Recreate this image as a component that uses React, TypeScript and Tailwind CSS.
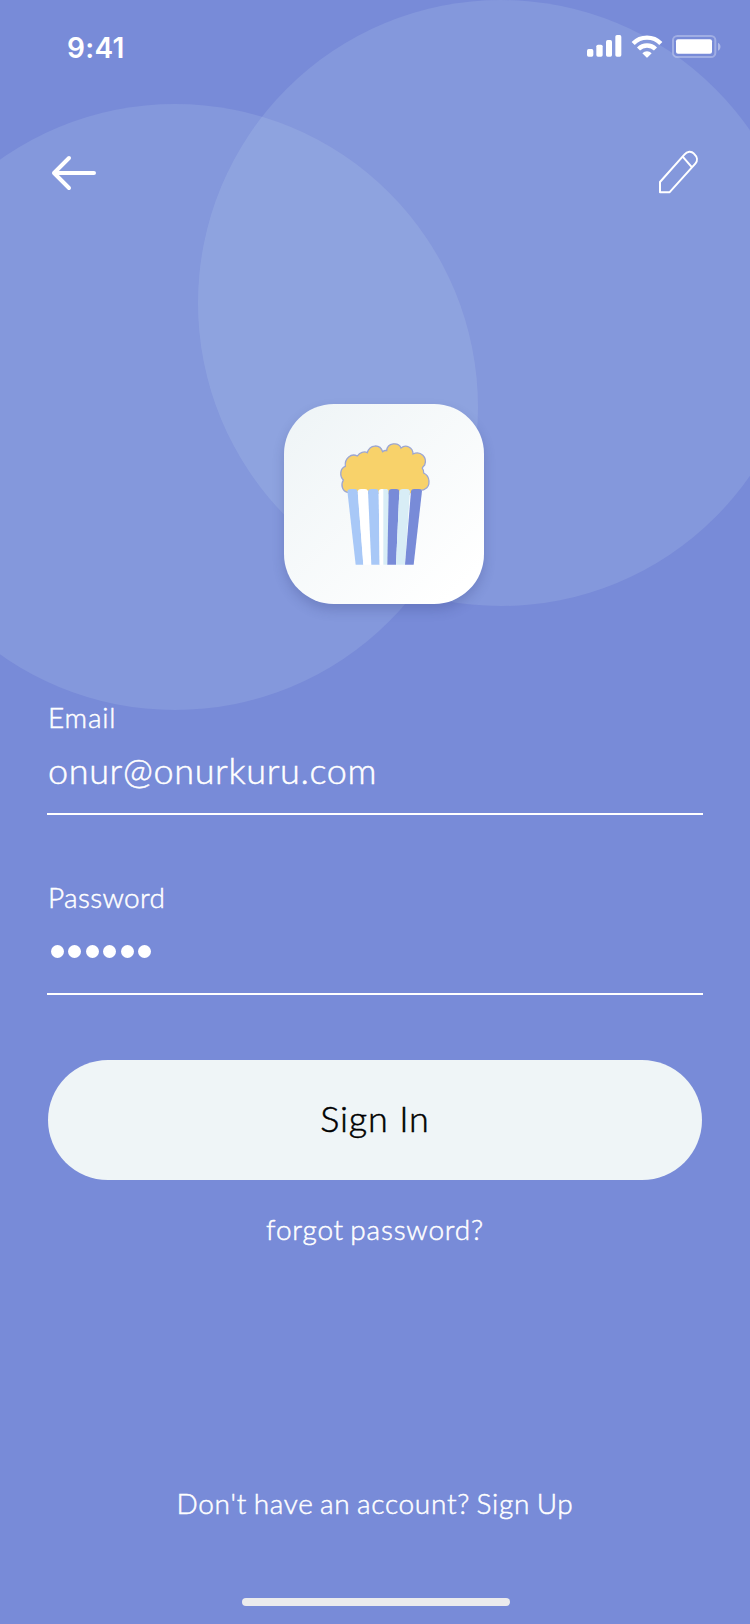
function SignalIcon() {
  return (
    <svg className="h-[22px] w-[35px]" viewBox="81 45 105 66" fill="white">
      <rect x="81" y="87" width="19" height="23" rx="5" />
      <rect x="109" y="74" width="19" height="36" rx="5" />
      <rect x="138" y="60" width="18" height="50" rx="5" />
      <rect x="166" y="45" width="18" height="65" rx="5" />
    </svg>
  );
}

function WifiIcon() {
  return (
    <svg className="h-[23px] w-[32px]" viewBox="212 42 96 69" fill="none" stroke="white" strokeWidth="13">
      <path d="M218.500 67.500A58 58 0 0 1 301.500 67.500" />
      <path d="M234.500 84A36 36 0 0 1 285.500 84" />
      <path d="M246 97C254 88.500 266 88.500 274 97L262 109Q260 111 258 109Z" fill="white" stroke="none" />
    </svg>
  );
}

function BatteryIcon() {
  return (
    <svg className="h-[23px] w-[49px]" viewBox="336 43 147 69" fill="none">
      <rect x="339" y="46" width="127" height="63" rx="13" stroke="white" strokeOpacity="0.3" strokeWidth="6" />
      <rect x="348" y="56" width="108" height="43" rx="6" fill="white" />
      <path d="M474 66C484 70 484 86 474 90Z" fill="white" fillOpacity="0.4" />
    </svg>
  );
}

function BackIcon() {
  return (
    <svg className="h-9 w-[46px]" viewBox="0 0 46 36" fill="none" stroke="white" strokeWidth="4" strokeLinecap="round" strokeLinejoin="round">
      <path d="M18 3L3 18L18 33M3 18H43" />
    </svg>
  );
}

function PencilIcon() {
  return (
    <svg className="h-11 w-[41px]" viewBox="294 390 123 132" fill="none" stroke="white" strokeWidth="6" strokeLinejoin="round">
      <path d="M300 486L373 404C382 393 394 393 402 401C413 411 413 423 406 431L329 516.500H300Z" />
      <path d="M368 410L396 442" />
    </svg>
  );
}

function PopcornLogo() {
  return (
    <svg className="h-[150px] w-[120px]" viewBox="0 0 360 450">
      <path
        d="M82 187C68 184 61 166 70 150C58 137 60 115 76 109C73 84 94 69 112 78C119 67 133 63 142 68C149 43 180 41 188 65C193 61 196 61 200 62C202 38 236 35 243 54C258 41 279 53 279 72C302 61 323 82 314 105C311 109 306 111 307 115Q312 121 311 129C331 138 332 169 315 177Q309 182 300 180L268 193Z"
        fill="#f8d26a"
        stroke="#9ca6d2"
        strokeWidth="4"
      />
      <path d="M82 183Q84 177 92 177H105Q111 177 113 183L130 404H107Z" fill="#a8c8f7" />
      <path d="M113 183Q115 177 123 177H135Q142 177 144 183L154 404H130Z" fill="white" />
      <path d="M144 183Q146 177 154 177H167Q174 177 176 183L179 404H154Z" fill="#a8c8f7" />
      <path d="M176 183Q178 177 184 177H200V404H179Z" fill="white" />
      <path d="M190 177H198Q204 177 206 183L203 404H190Z" fill="#d8edf6" />
      <path d="M206 183Q208 177 215 177H229Q237 177 238 183L228 404H202Z" fill="#788bd8" />
      <path d="M238 183Q240 177 248 177H261Q268 177 270 183L256 404H228Z" fill="#d8edf6" />
      <path d="M270 190L273 190L258 404H255Z" fill="white" />
      <path d="M273 183Q275 177 282 177H297Q304 177 306 183L281 404H255Z" fill="#788bd8" />
    </svg>
  );
}

export default function App() {
  return (
    <div className="relative flex h-[1624px] w-[750px] flex-col overflow-hidden bg-[#788bd8] font-['Lato',sans-serif] font-light text-white">
      <div className="absolute top-[104px] left-[-128px] size-[606px] rounded-full bg-[#d8edf6]/13" />
      <div className="absolute top-0 left-[198px] size-[606px] rounded-full bg-[#d8edf6]/13" />

      <header className="relative flex h-[92px] items-center justify-between pr-[29px] pl-[67px]">
        <span className="pt-[3px] font-['Inter',sans-serif] text-[28px] leading-8 font-semibold tracking-[0.3px]">9:41</span>
        <div className="flex items-center gap-[9px]">
          <SignalIcon />
          <WifiIcon />
          <BatteryIcon />
        </div>
      </header>

      <nav className="relative flex h-40 items-start justify-between pt-[58px] pr-[51px] pl-[51px]">
        <button className="mt-[5px]" aria-label="Back">
          <BackIcon />
        </button>
        <button aria-label="Edit">
          <PencilIcon />
        </button>
      </nav>

      <div className="relative mt-[152px] ml-[284px] size-[200px] rounded-[50px] bg-linear-to-br from-[#eef4f6] to-white to-90% pt-[26px] pl-9 shadow-[0_6px_12px_rgba(40,50,110,0.22)]">
        <PopcornLogo />
      </div>

      <main className="relative mt-[93px] flex flex-col px-[47px] [-webkit-text-stroke:0.5px]">
        <label className="flex h-[118px] flex-col border-b-2 border-white">
          <span className="pl-px text-[28px] leading-10 tracking-[0.8px]">Email</span>
          <span className="mt-[7px] pl-px text-[36px] leading-[52px] tracking-[0.65px]">onur@onurkuru.com</span>
        </label>
        <div className="mt-[62px] flex h-[118px] flex-col border-b-2 border-white">
          <span className="pl-px text-[28px] leading-10 tracking-[0.35px]">Password</span>
          <div className="mt-[28px] ml-[3.500px] flex gap-[4.500px]">
            {[0, 1, 2, 3, 4, 5].map((i) => (
              <span key={i} className="size-[13px] rounded-full bg-white" />
            ))}
          </div>
        </div>
        <button className="mx-px mt-[65px] h-[120px] rounded-full bg-[#eff5f7] pb-[5px] text-[36px] tracking-[0.8px] text-black">Sign In</button>
        <a className="mt-[29px] self-center text-[28px] leading-10 tracking-[0.8px] [word-spacing:-2px]">forgot password?</a>
      </main>

      <footer className="relative mt-auto flex flex-col items-center pb-[18px]">
        <a className="text-[28px] leading-10 tracking-[0.7px] [-webkit-text-stroke:0.5px] [word-spacing:-1.700px]">
          Don't have an account? Sign Up
        </a>
        <div className="mt-[75px] ml-[2px] h-2 w-[268px] rounded-full bg-[#ebebed]" />
      </footer>
    </div>
  );
}
